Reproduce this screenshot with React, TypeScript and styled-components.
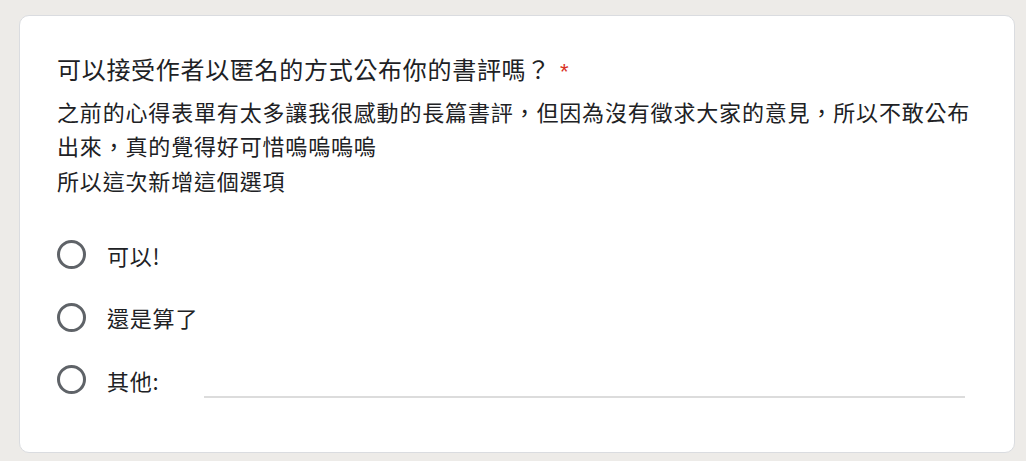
import React from "react";
import styled, { createGlobalStyle } from "styled-components";

const GlobalStyle = createGlobalStyle`
  html, body {
    margin: 0;
    padding: 0;
    background: #edebe8;
  }
  body {
    font-family: "Noto Sans CJK TC", "Noto Sans", sans-serif;
    color: #202124;
  }
`;

const Page = styled.div`
  padding: 15px 11px 9px 19px;
`;

const Card = styled.section`
  background: #ffffff;
  border: 1px solid #dadce0;
  border-radius: 10px;
  padding: 36px 36px 41px 37px;
`;

const Title = styled.div`
  font-size: 24px;
  letter-spacing: 0.7px;
  line-height: 34px;
  color: #202124;
  white-space: nowrap;
`;

const Required = styled.span`
  color: #d93025;
  font-family: "Liberation Sans", Arial, sans-serif;
  font-size: 22px;
  margin-left: 9px;
`;

const Description = styled.div`
  margin-top: 4.5px;
  font-size: 22px;
  letter-spacing: 0.83px;
  line-height: 34.5px;
  color: #202124;
`;

const DescLine = styled.div`
  white-space: nowrap;
`;

const Options = styled.div`
  margin-top: 26.5px;
  display: flex;
  flex-direction: column;
`;

const OptionRow = styled.label`
  display: flex;
  align-items: center;
  height: 62.5px;
  cursor: pointer;
`;

const Radio = styled.span`
  box-sizing: border-box;
  width: 29px;
  height: 29px;
  border: 3px solid #5f6368;
  border-radius: 50%;
  flex: 0 0 auto;
`;

const OptionText = styled.span<{ $width?: number }>`
  margin-left: 21px;
  font-size: 22px;
  letter-spacing: 0.8px;
  line-height: 34px;
  color: #202124;
  white-space: nowrap;
  ${(p) => (p.$width ? `width: ${p.$width}px;` : "")}
`;

const OtherInput = styled.div`
  box-sizing: border-box;
  width: 761px;
  height: 34px;
  margin-top: 2px;
  border-bottom: 2px solid #dcdcdc;
`;

const options = ["可以!", "還是算了"];

export default function App() {
  return (
    <>
      <GlobalStyle />
      <Page>
        <Card>
          <Title>
            可以接受作者以匿名的方式公布你的書評嗎？
            <Required>*</Required>
          </Title>
          <Description>
            <DescLine>
              之前的心得表單有太多讓我很感動的長篇書評，但因為沒有徵求大家的意見，所以不敢公布
            </DescLine>
            <DescLine>出來，真的覺得好可惜嗚嗚嗚嗚</DescLine>
            <DescLine>所以這次新增這個選項</DescLine>
          </Description>
          <Options>
            {options.map((o) => (
              <OptionRow key={o}>
                <Radio />
                <OptionText>{o}</OptionText>
              </OptionRow>
            ))}
            <OptionRow>
              <Radio />
              <OptionText $width={97}>其他:</OptionText>
              <OtherInput />
            </OptionRow>
          </Options>
        </Card>
      </Page>
    </>
  );
}
